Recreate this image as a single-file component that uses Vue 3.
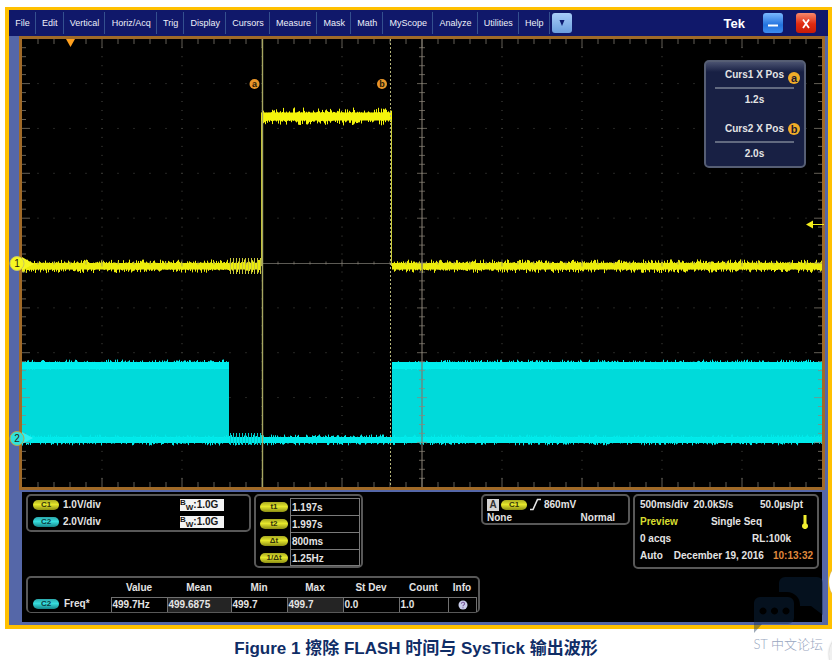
<script setup>
const menus = [
  'File', 'Edit', 'Vertical', 'Horiz/Acq', 'Trig', 'Display', 'Cursors',
  'Measure', 'Mask', 'Math', 'MyScope', 'Analyze', 'Utilities', 'Help',
]

const W = 800
const H = 448
const DX = W / 10
const DY = 44.85
const MID = 224

// Small deterministic generator, so the noise is the same on every load
function rng(seed) {
  let s = seed
  return () => {
    s = (s * 1664525 + 1013904223) % 4294967296
    return s / 4294967296
  }
}

// Vertical one-pixel strokes around a level: the fuzzy edge of a trace
function noise(x0, x1, top, bottom, amp, seed) {
  const r = rng(seed)
  let d = ''
  for (let x = x0; x < x1; x += 1) {
    const up = Math.pow(r(), 3) * amp
    const down = Math.pow(r(), 3) * amp
    d += `M${x + 0.5} ${(top - up).toFixed(1)}V${(bottom + down).toFixed(1)}`
  }
  return d
}

function ringing(x0, x1, mid, amp) {
  let d = ''
  for (let x = x0; x < x1; x += 3) d += `M${x + 0.5} ${mid - amp}V${mid + amp}`
  return d
}

const yellowLow = noise(0, 239, 224, 230.5, 3.6, 7) + noise(370, 800, 224, 230.5, 3.6, 11)
const yellowHigh = noise(239, 370, 73.5, 81.5, 5, 23)
const yellowRing = ringing(208, 239, 227, 8)
const cyanTop = noise(0, 207, 323.5, 328, 3, 31) + noise(370, 800, 323.5, 328, 3, 37)
const cyanBase = noise(0, 800, 398.5, 403.5, 3, 41)
const cyanRing = ringing(208, 240, 400, 6)

const rows = [-4, -3, -2, -1, 1, 2, 3, 4].map((n) => MID + n * DY)
const cols = [1, 2, 3, 4, 6, 7, 8, 9].map((n) => n * DX)

let dots = ''
for (const y of rows) for (let x = 16; x < W; x += 16) dots += `M${x - 0.5} ${y}h1`
for (const x of cols) for (let k = -24; k <= 24; k++) dots += `M${x - 0.5} ${(MID + (k * DY) / 5).toFixed(1)}h1`

let ticks = ''
for (let i = 1; i < 50; i++) {
  const x = i * 16
  const n = i % 5 === 0 ? 9 : 5
  ticks += `M${x} 0V${n}M${x} ${H}v${-n}M${x} ${MID - (n - 2) / 2}v${n - 2}`
}
for (let k = -24; k <= 24; k++) {
  const y = (MID + (k * DY) / 5).toFixed(1)
  const n = k % 5 === 0 ? 8 : 4
  ticks += `M0 ${y}h${n}M${W} ${y}h${-n}M${400 - (n + 2) / 2} ${y}h${n + 2}`
}

const cursorTimes = [
  { label: 't1', value: '1.197s' },
  { label: 't2', value: '1.997s' },
  { label: 'Δt', value: '800ms' },
  { label: '1/Δt', value: '1.25Hz' },
]
const stats = [
  { name: 'Value', value: '499.7Hz' },
  { name: 'Mean', value: '499.6875', shaded: true },
  { name: 'Min', value: '499.7' },
  { name: 'Max', value: '499.7', shaded: true },
  { name: 'St Dev', value: '0.0' },
  { name: 'Count', value: '1.0' },
]
</script>

<template>
  <main class="page">
    <figure class="figure">
      <div class="scope">
        <header class="bar">
          <nav class="menus">
            <button v-for="m in menus" :key="m" type="button" class="menu">{{ m }}</button>
          </nav>
          <button type="button" class="key key-drop" aria-label="More menus">
            <svg width="8" height="8" viewBox="0 0 8 8"><path d="M1.500 1h5L4 7z" fill="#0d1c70" /></svg>
          </button>
          <span class="brand">Tek</span>
          <button type="button" class="key key-min" aria-label="Minimize">
            <svg width="20" height="20" viewBox="0 0 20 20"><path d="M5 12.500h10" stroke="#fff" stroke-width="2" /></svg>
          </button>
          <button type="button" class="key key-close" aria-label="Close">
            <svg width="20" height="20" viewBox="0 0 20 20"><path d="M7 6.500l6 8.500M13 6.500l-6 8.500" stroke="#fff" stroke-width="1.800" /></svg>
          </button>
        </header>

        <div class="body">
          <section class="plot">
            <svg class="wave" :viewBox="`0 0 ${W} ${H}`">
              <path :d="dots" stroke="#4b4b46" stroke-width="1" />
              <path :d="`M0 ${MID + 0.5}H${W}`" stroke="#5c5a54" />

              <path d="M0 323H207V400H0zM370 323H800V400H370z" fill="#00dada" />
              <path d="M0 323H207V330H0zM370 323H800V330H370z" fill="#00f0f0" />
              <path :d="cyanTop" stroke="#00eeee" />
              <path d="M0 398H800V404H0z" fill="#00f2f2" />
              <path :d="cyanBase" stroke="#00eaea" />
              <path :d="cyanRing" stroke="#00caca" />

              <path d="M239.500 78V227M369.500 78V227" stroke="#c9c935" />
              <path d="M0 225H239V230H0zM370 225H800V230H370zM239 74H370V81H239z" fill="#f7f70a" />
              <path :d="yellowLow" stroke="#ecec0c" />
              <path :d="yellowRing" stroke="#c8c83c" />
              <path :d="yellowHigh" stroke="#f4f40c" />

              <path d="M400 0V448" stroke="#7d776b" stroke-width="1.500" opacity=".75" />
              <path :d="ticks" stroke="#8d867a" opacity=".7" />
              <path d="M240.500 0V448" stroke="#a6a662" stroke-width="1.400" />
              <path d="M368.500 0V448" stroke="#b5b57a" stroke-dasharray="2 2" />

              <path d="M44 0h9l-4.500 8z" fill="#ffa01e" />
              <path d="M784 185.500l7-4v8zM790 185h12v1h-12z" fill="#f4ee1c" />

              <g class="tag">
                <circle cx="232.500" cy="45" r="5" fill="#e8962a" />
                <text x="232.500" y="48">a</text>
                <circle cx="360" cy="45" r="5" fill="#e8962a" />
                <text x="360" y="48">b</text>
              </g>

              <g class="channel">
                <path d="M0 218l12 7-12 6z" fill="#f7f722" />
                <circle cx="-5" cy="224.500" r="7" fill="#f7f722" stroke="#c9c860" />
                <text x="-5" y="228">1</text>
                <path d="M0 393l11 6-11 6z" fill="#2ef2f2" />
                <circle cx="-5" cy="399.500" r="7" fill="#2fe3dc" stroke="#b9a54a" />
                <text x="-5" y="403">2</text>
              </g>
            </svg>

            <aside class="cursors">
              <div class="cursor">
                <h3>Curs1 X Pos</h3>
                <span class="badge badge-low">a</span>
                <p>1.2s</p>
              </div>
              <div class="cursor">
                <h3>Curs2 X Pos</h3>
                <span class="badge">b</span>
                <p>2.0s</p>
              </div>
            </aside>
          </section>

          <section class="panel">
            <div class="readouts">
              <div class="box channels">
                <div class="line"><span class="pill">C1</span>1.0V/div<span class="bw"><sup>B</sup><sub>W</sub>:1.0G</span></div>
                <div class="line"><span class="pill cyan">C2</span>2.0V/div<span class="bw"><sup>B</sup><sub>W</sub>:1.0G</span></div>
              </div>

              <div class="box times">
                <div v-for="t in cursorTimes" :key="t.label" class="time">
                  <span class="pill wide">{{ t.label }}</span>
                  <span class="time-value">{{ t.value }}</span>
                </div>
              </div>

              <div class="box trigger">
                <div class="trigger-line">
                  <span class="source">A</span>
                  <span class="pill">C1</span>
                  <svg width="13" height="13" viewBox="0 0 13 13"><path d="M1 11.500h3L8.500 1.500H12" fill="none" stroke="#e6e6e6" stroke-width="1.600" /></svg>
                  <span>860mV</span>
                </div>
                <div class="trigger-mode"><span>None</span><span>Normal</span></div>
              </div>

              <div class="box timebase">
                <div class="line"><span>500ms/div</span><span class="rate">20.0kS/s</span><span class="end resolution">50.0µs/pt</span></div>
                <div class="line">
                  <span class="preview">Preview</span><span class="end">Single Seq</span>
                  <svg class="thermo" width="6" height="14" viewBox="0 0 6 14"><path d="M1.500 0h3v8.500a3 3 0 1 1-3 0z" fill="#f2ee30" /></svg>
                </div>
                <div class="line"><span>0 acqs</span><span class="end record">RL:100k</span></div>
                <div class="line"><span>Auto</span><span class="date">December 19, 2016</span><time class="end clock">10:13:32</time></div>
              </div>
            </div>

            <div class="box measure">
              <table>
                <colgroup>
                  <col class="c-name"><col class="c-std"><col class="c-mean"><col class="c-std">
                  <col class="c-std"><col class="c-std"><col class="c-count"><col class="c-info">
                </colgroup>
                <thead>
                  <tr>
                    <td></td>
                    <th v-for="s in stats" :key="s.name" scope="col">{{ s.name }}</th>
                    <th scope="col">Info</th>
                  </tr>
                </thead>
                <tbody>
                  <tr>
                    <th scope="row"><span class="name"><span class="pill cyan">C2</span>Freq*</span></th>
                    <td v-for="s in stats" :key="s.name" :class="{ shaded: s.shaded }">{{ s.value }}</td>
                    <td class="info">
                      <button type="button" aria-label="Measurement info">
                        <svg width="10" height="10" viewBox="0 0 10 10"><circle cx="5" cy="5" r="4.500" fill="#c9cdea" /><path d="M3.400 3.800a1.600 1.500 0 1 1 2.300 1.300Q5 5.500 5 6.200M5 7.200v1" fill="none" stroke="#7a5a9c" stroke-width="1.100" /></svg>
                      </button>
                    </td>
                  </tr>
                </tbody>
              </table>
            </div>
          </section>
        </div>
      </div>
      <figcaption>Figure 1 擦除 FLASH 时间与 SysTick 输出波形</figcaption>
    </figure>

    <div class="watermark">
      <svg width="70" height="56" viewBox="0 0 70 56">
        <g fill="#0c2a4c" fill-opacity=".4">
          <path d="M32 0h32a6 6 0 0 1 6 6v32l-12-9H47v-1a13 13 0 0 0-13-13H26V6a6 6 0 0 1 6-6z" />
          <path fill-rule="evenodd" d="M7 20h28a6 6 0 0 1 6 6v15a6 6 0 0 1-6 6H9l-8 9V26a6 6 0 0 1 6-6zM10 30.500a3.500 3.500 0 1 0 .01 0zM21.500 30.500a3.500 3.500 0 1 0 .01 0zM33 30.500a3.500 3.500 0 1 0 .01 0z" />
        </g>
      </svg>
      <span>ST 中文论坛</span>
    </div>
    <span class="float float-upper"></span>
    <span class="float float-lower"></span>
  </main>
</template>

<style>
body {
  margin: 0;
  background: #fff;
}
</style>

<style scoped>
.page {
  position: relative;
  overflow: hidden;
  padding: 7px 0 0 5px;
  font: bold 10px/17px "Liberation Sans", Arial, sans-serif;
  color: #e4e4e4;
}
.figure { margin: 0; }
.scope {
  border: 4px solid #ffc000;
  border-top-width: 3px;
  background: #5567a8;
}
button {
  padding: 0;
  border: 0;
  background: none;
  color: inherit;
  font: inherit;
}
.bar {
  display: flex;
  align-items: center;
  height: 26px;
  padding-right: 12px;
  background: #10186a;
}
.menus {
  display: flex;
  flex: 0 0 67%;
  height: 22px;
}
.menu {
  flex: 1 1 auto;
  padding: 0 5px 0 6px;
  border-right: 1px solid #34508f;
  font-size: 9px;
  font-weight: normal;
  color: #eef0fa;
}
.key {
  display: flex;
  align-items: center;
  justify-content: center;
  width: 20px;
  height: 20px;
  border-radius: 3px;
}
.key-drop {
  margin-left: 2px;
  background: linear-gradient(#a8ccf8, #6a9ede);
}
.brand {
  margin: 0 18px 0 auto;
  font-size: 13px;
  color: #fff;
}
.key-min { background: linear-gradient(#7ab8ff, #2272de 60%, #3d8cf0); }
.key-close {
  margin-left: 13px;
  background: linear-gradient(#f8886c, #e02a10 55%, #c81c08);
}

.body { padding: 0 3px 3px 10px; }
.plot {
  position: relative;
  border: 3px solid #a06a28;
  background: #000;
}
.wave {
  display: block;
  width: 100%;
  height: auto;
  overflow: visible;
  fill: none;
}
.tag text,
.channel text {
  text-anchor: middle;
  fill: #2a1c08;
  font-size: 9px;
}
.channel text {
  font-size: 10px;
  font-weight: normal;
}
.cursors {
  position: absolute;
  top: 21px;
  right: 16px;
  box-sizing: border-box;
  width: 102px;
  padding: 5px 10px 1px 9px;
  border: 2px solid #565e74;
  border-radius: 5px;
  background: linear-gradient(#4a5270, #182044 10px);
}
.cursor { position: relative; }
.cursor + .cursor { margin-top: 10px; }
.cursor h3 {
  margin: 0;
  padding-bottom: 5px;
  border-bottom: 2px solid #626a80;
  text-align: center;
  white-space: nowrap;
  font-size: 10px;
  line-height: 15px;
}
.cursor p {
  margin: 0;
  line-height: 22px;
  text-align: center;
}
.badge {
  position: absolute;
  top: 2px;
  right: -6px;
  width: 12px;
  height: 12px;
  border-radius: 50%;
  background: #f0ac28;
  color: #1c1830;
  font-size: 11px;
  line-height: 12px;
  text-align: center;
}
.badge-low { top: 5px; }

.panel {
  margin: 2px 3px 0;
  padding: 2px 3px 9px 4px;
  background: #000;
}
.readouts {
  display: flex;
  align-items: flex-start;
}
.box {
  box-sizing: border-box;
  border: 2px solid #585858;
  border-radius: 5px;
}
.line {
  display: flex;
  align-items: center;
  height: 17px;
}
.pill {
  width: 26px;
  height: 10px;
  border-radius: 5px;
  background: linear-gradient(#a8aa20, #e6e82c 45%, #8c8e14);
  color: #33340a;
  font-size: 8px;
  line-height: 10px;
  text-align: center;
}
.pill.wide { width: 28px; }
.pill.cyan {
  background: linear-gradient(#2ca8ac, #36dcdc 45%, #168488);
  color: #0a3c40;
}
.channels {
  flex: 0 0 225px;
  padding: 0 25px 0 5px;
}
.channels .pill { margin-right: 4px; }
.bw {
  width: 44px;
  height: 12px;
  margin-left: auto;
  background: #f4f4f4;
  color: #181818;
  line-height: 12px;
  white-space: nowrap;
}
.bw sup,
.bw sub {
  font-size: 8px;
  line-height: 0;
}
.bw sup { vertical-align: 3px; }
.bw sub { vertical-align: -2px; }
.times {
  flex: 0 0 109px;
  margin-left: 3px;
  padding: 2px 1px 0 4px;
}
.time {
  display: flex;
  align-items: center;
  gap: 2px;
  height: 17px;
}
.time-value {
  box-sizing: border-box;
  flex: 1;
  height: 17px;
  padding-left: 1px;
  border: 1px solid #7a7a7a;
  border-bottom: 0;
  line-height: 17px;
}
.time:last-child .time-value { border-bottom: 1px solid #7a7a7a; }
.trigger {
  flex: 0 0 149px;
  margin-left: auto;
  padding: 1px 13px 0 4px;
}
.trigger-line {
  display: flex;
  align-items: center;
  gap: 2px;
  height: 15px;
}
.source {
  width: 12px;
  height: 12px;
  background: #d4d4d4;
  color: #303030;
  line-height: 12px;
  text-align: center;
}
.trigger-mode {
  display: flex;
  justify-content: space-between;
  line-height: 11px;
}
.timebase {
  flex: 0 0 186px;
  margin-left: 3px;
  padding: 0 4px 3px 5px;
}
.end { margin-left: auto; }
.rate { margin-left: 5px; }
.resolution { margin-right: 10px; }
.preview { color: #d8de30; }
.thermo { margin: 0 5px 0 40px; }
.record { margin-right: 22px; }
.date { margin-left: 11px; }
.clock { color: #e08a3c; }

.measure {
  width: 454px;
  margin-top: 7px;
  border-bottom-width: 1px;
}
table {
  width: 448px;
  border-collapse: collapse;
  table-layout: fixed;
}
.c-name { width: 83px; }
.c-std { width: 56px; }
.c-mean { width: 64px; }
.c-count { width: 49px; }
.c-info { width: 28px; }
th,
td { padding: 0; }
thead tr { height: 19px; }
tbody td {
  height: 14px;
  padding-left: 1px;
  border: 1px solid #707070;
  border-bottom: 0;
  line-height: 14px;
}
.shaded { background: #242424; }
.name {
  display: flex;
  align-items: center;
  gap: 5px;
  padding-left: 5px;
  line-height: 14px;
}
.info { text-align: center; }
.info button {
  display: block;
  margin: 0 auto;
  height: 10px;
  line-height: 0;
}

figcaption {
  padding: 8px 5px 0 0;
  text-align: center;
  font: bold 17px/24px "Liberation Sans", "Noto Sans CJK SC", sans-serif;
  color: #0f2d66;
}
.watermark {
  position: absolute;
  top: 577px;
  right: 9px;
  display: flex;
  flex-direction: column;
  align-items: flex-end;
  gap: 3px;
  color: #99a6c0;
  font: 300 13px/16px Lato, "Noto Sans CJK SC", sans-serif;
  white-space: nowrap;
}
.float {
  position: absolute;
  right: -41px;
  width: 44px;
  height: 44px;
  border-radius: 50%;
  background: #fff;
  box-shadow: 0 0 2px #b0b0b0;
}
.float-upper { top: 560px; }
.float-lower {
  top: 632px;
  background: #f0f0f0;
}
</style>
